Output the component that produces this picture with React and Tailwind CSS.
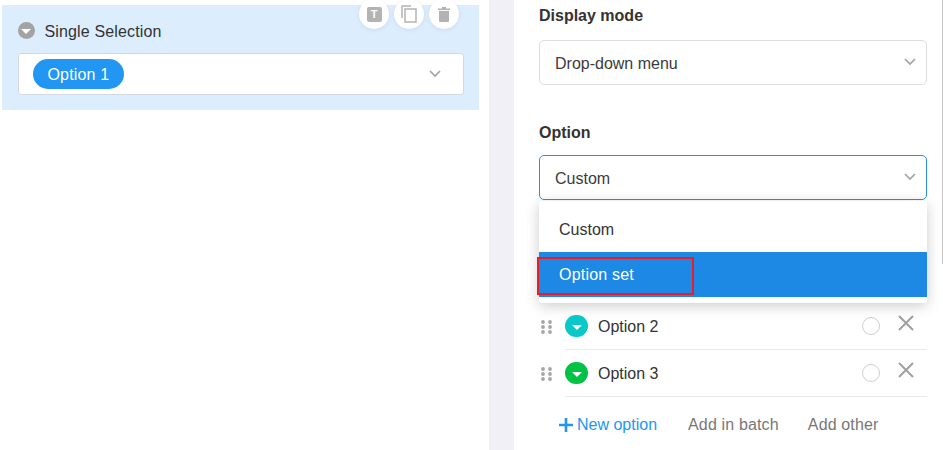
import React from 'react'

function Caret({ bg, size = 'w-[23px] h-[22px]' }) {
  return (
    <span className={`${size} ${bg} rounded-full flex items-center justify-center shrink-0`}>
      <span className="w-0 h-0 border-x-[5px] border-x-transparent border-t-[5px] border-t-white mt-[2px]"></span>
    </span>
  )
}

function Chevron({ className }) {
  return (
    <svg className={className} width="14" height="8" viewBox="0 0 14 8" fill="none">
      <path d="M2 1 L7 6 L12 1" stroke="#a3a3a3" strokeWidth="1.7" />
    </svg>
  )
}

function Grip() {
  return (
    <svg width="11" height="14" viewBox="0 0 11 14" className="shrink-0">
      {[2, 7, 12].map((y) => (
        <g key={y} fill="#a6a6a6">
          <circle cx="2" cy={y} r="1.9" />
          <circle cx="9" cy={y} r="1.9" />
        </g>
      ))}
    </svg>
  )
}

function FloatBtn({ children }) {
  return (
    <div className="w-[30px] h-[30px] rounded-full bg-white shadow-[0_1px_5px_rgba(0,0,0,0.08)] flex items-center justify-center">
      {children}
    </div>
  )
}

function SelectBox({ text, active }) {
  return (
    <div className={`h-[45px] rounded-[5px] border flex items-center justify-between pl-[15px] pr-[9px] ${active ? 'border-[#2c8fe6]' : 'border-[#dedede]'}`}>
      <span className="text-[16px] text-[#3b3b3b] mt-[2px]">{text}</span>
      <Chevron className="mb-[2px]" />
    </div>
  )
}

function OptionRow({ bg, label }) {
  return (
    <div className="flex items-center h-[47px]">
      <div className="w-[26px] flex items-center pl-[2px] mb-[-1px]">
        <Grip />
      </div>
      <div className="flex-1 h-full flex items-center border-b border-[#ebebeb]">
        <Caret bg={bg} />
        <span className="ml-[10px] text-[16px] text-[#333] mt-[2px]">{label}</span>
        <span className="ml-auto w-[18px] h-[18px] rounded-full border border-[#cfcfcf] mr-[18px]"></span>
        <svg className="mr-[13px] mb-[6px]" width="16" height="16" viewBox="0 0 16 16" fill="none">
          <path d="M1 1 L15 15 M15 1 L1 15" stroke="#a0a0a0" strokeWidth="2" />
        </svg>
      </div>
    </div>
  )
}

export default function App() {
  return (
    <div className="relative w-[943px] h-[450px] overflow-hidden flex bg-white font-['Liberation_Sans',Arial,sans-serif]">
      <div className="w-[489px] shrink-0 pt-[5px] pl-[2px] pr-[10px]">
        <div className="relative h-[105px] bg-[#dceefe] px-[15.5px] pt-[16px]">
          <div className="absolute top-[-6px] right-[20px] flex gap-[5px]">
            <FloatBtn>
              <span className="w-[15px] h-[15px] bg-[#b3b3b3] rounded-[2px] flex items-center justify-center text-white text-[11px] font-bold leading-none">T</span>
            </FloatBtn>
            <FloatBtn>
              <svg width="16" height="18" viewBox="0 0 16 18" fill="none">
                <path d="M1 13 V1 H10" stroke="#b3b3b3" strokeWidth="1.5" />
                <rect x="4" y="4" width="11" height="13" stroke="#b3b3b3" strokeWidth="1.5" />
              </svg>
            </FloatBtn>
            <FloatBtn>
              <svg width="12" height="15" viewBox="0 0 12 15" fill="#b3b3b3">
                <rect x="0" y="1.5" width="12" height="1.6" />
                <rect x="4" y="0" width="4" height="2" />
                <path d="M1 4 H11 V14 Q11 15 10 15 H2 Q1 15 1 14 Z" />
              </svg>
            </FloatBtn>
          </div>
          <div className="flex items-center h-[20px]">
            <Caret bg="bg-[#a3a3a3]" size="w-[17px] h-[17px] mb-[2px]" />
            <span className="ml-[10px] text-[16px] text-[#333] tracking-[0.15px] mt-[2px]">Single Selection</span>
          </div>
          <div className="mt-[12px] h-[42px] bg-white rounded-[3px] border border-[#d5d9df] flex items-center justify-between pl-[14px] pr-[21px]">
            <span className="h-[30px] w-[91px] pl-[15px] pt-[2px] rounded-full bg-[#2196f3] text-white text-[16px] tracking-[0.15px] flex items-center">Option 1</span>
            <Chevron />
          </div>
        </div>
      </div>

      <div className="w-[25px] shrink-0 bg-[#f0f0f6]"></div>

      <div className="flex-1 relative pl-[25px] pr-[16px]">
        <div className="h-[30px] pt-[2px] flex items-center text-[16px] font-bold text-[#333]">Display mode</div>
        <div className="mt-[10px]">
          <SelectBox text="Drop-down menu" />
        </div>
        <div className="mt-[32px] h-[30px] pt-[2px] flex items-center text-[16px] font-bold text-[#333]">Option</div>
        <div className="relative mt-[8px]">
          <SelectBox text="Custom" active />
          <div className="absolute z-10 left-0 right-0 top-[46px] h-[102px] bg-white rounded-[3px] shadow-[0_3px_14px_rgba(0,0,0,0.2)] pt-[6px]">
            <div className="h-[45px] flex items-center pl-[20px] text-[16px] text-[#333]">Custom</div>
            <div className="h-[45px] flex items-center pl-[20px] text-[16px] tracking-[0.2px] text-white bg-[#1e88e5]">Option set</div>
            <div className="absolute left-[-2px] top-[56px] w-[157px] h-[38px] border-[2px] border-[#ed1c24]"></div>
          </div>
        </div>
        <div className="mt-[103px]">
          <OptionRow bg="bg-[#0bc8c8]" label="Option 2" />
          <OptionRow bg="bg-[#00c244]" label="Option 3" />
        </div>
        <div className="flex items-center h-[55px] pl-[20px] text-[16px] text-[#777]">
          <span className="text-[#2196f3] flex items-center">
            <svg className="mr-[4px]" width="14" height="14" viewBox="0 0 14 14" fill="none">
              <path d="M7 0 V14 M0 7 H14" stroke="#2196f3" strokeWidth="2.6" />
            </svg>
            New option
          </span>
          <span className="ml-[31px] tracking-[0.15px]">Add in batch</span>
          <span className="ml-[29px] tracking-[0.15px]">Add other</span>
        </div>
      </div>

      <div className="absolute right-0 top-0 w-[1px] h-[264px] bg-[#c4c4c4]"></div>
    </div>
  )
}
